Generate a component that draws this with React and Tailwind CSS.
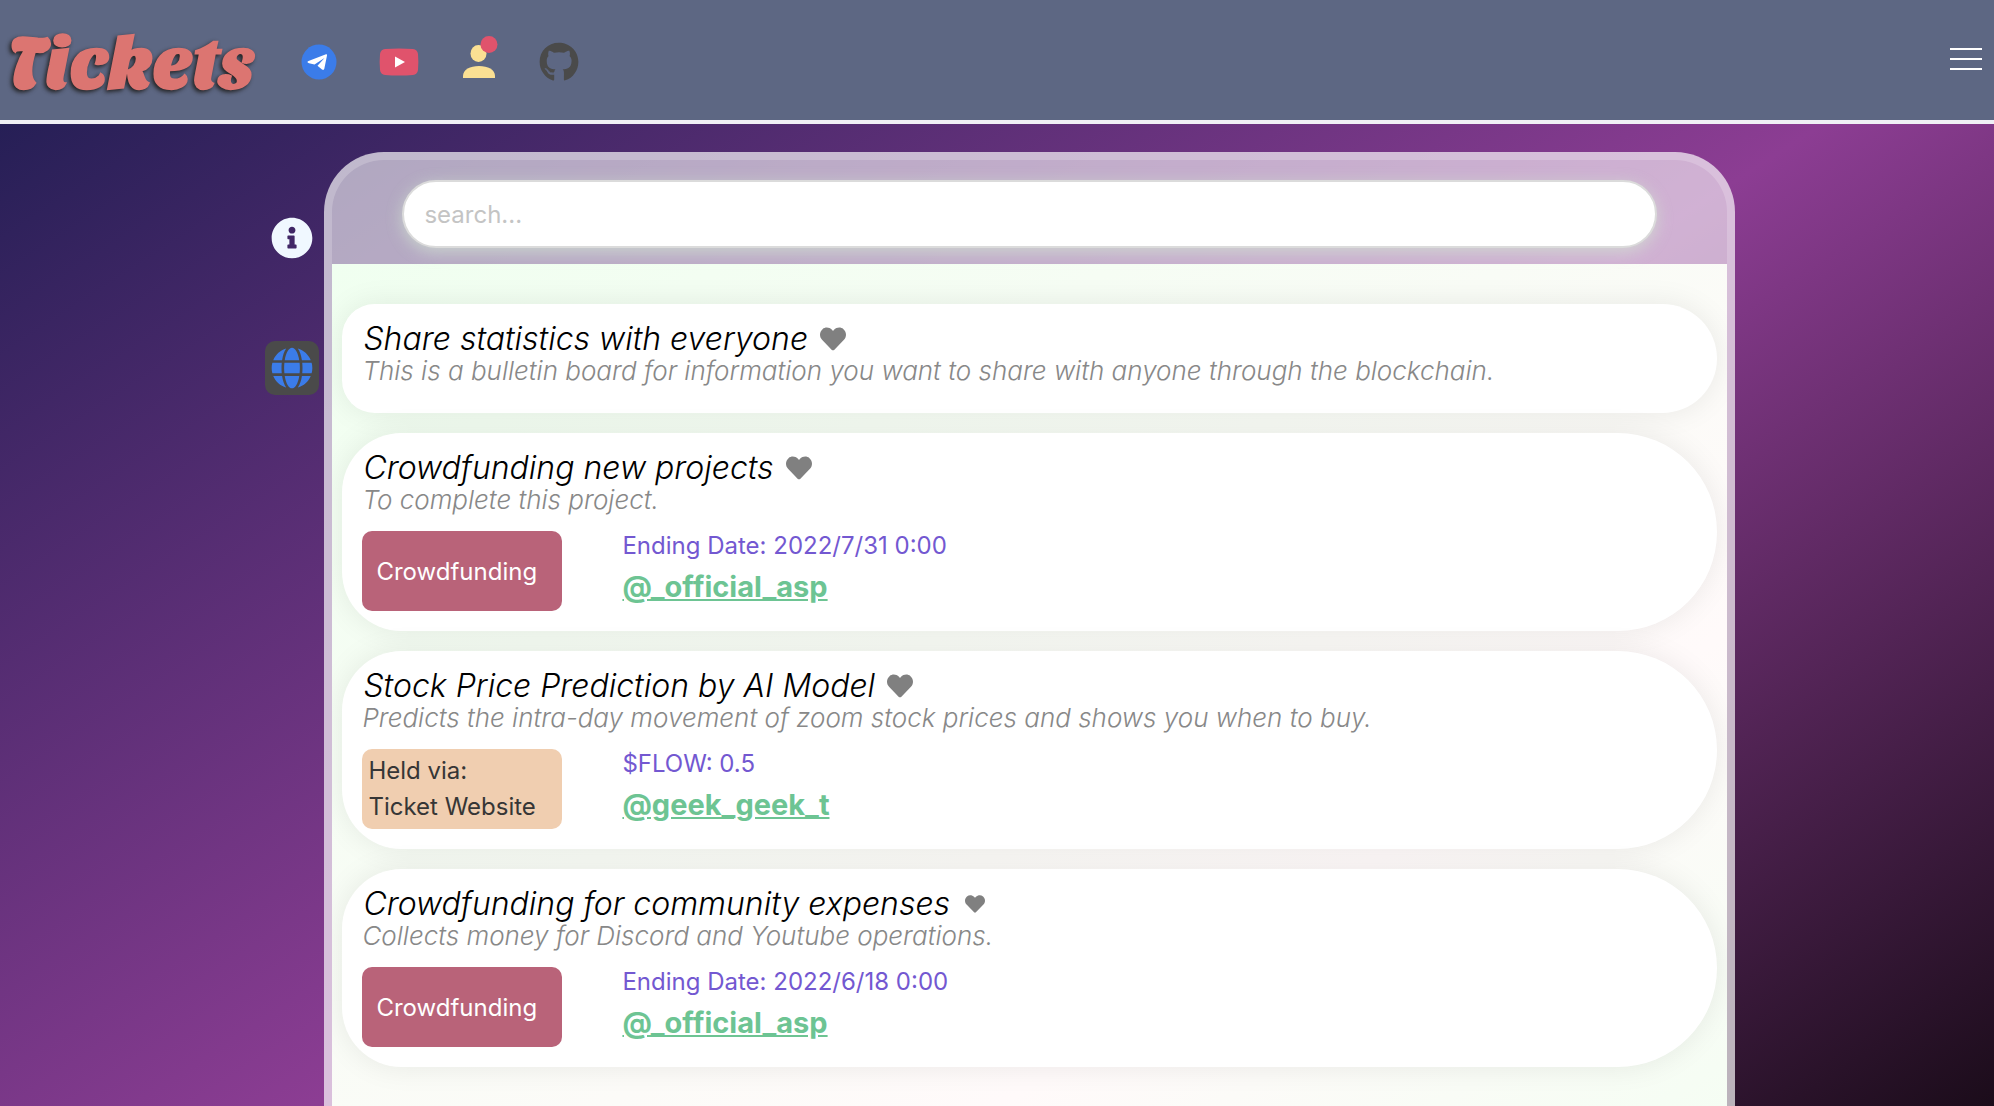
import { FaGithub, FaHeart, FaGlobe, FaInfoCircle } from "react-icons/fa";

const tickets = [
  { title: "Share statistics with everyone", text: "This is a bulletin board for information you want to share with anyone through the blockchain." },
  { title: "Crowdfunding new projects", text: "To complete this project.", kind: "fund", info: "Ending Date: 2022/7/31 0:00", user: "@_official_asp" },
  { title: "Stock Price Prediction by AI Model", text: "Predicts the intra-day movement of zoom stock prices and shows you when to buy.", kind: "web", info: "$FLOW: 0.5", user: "@geek_geek_t" },
  { title: "Crowdfunding for community expenses", text: "Collects money for Discord and Youtube operations.", kind: "fund", info: "Ending Date: 2022/6/18 0:00", user: "@_official_asp", small: true },
];

function Badge({ kind }) {
  if (kind === "fund")
    return <div className="flex h-20 w-[200px] items-center rounded-[10px] bg-[#b96379] px-3.5 pt-0.5 text-2xl text-white">Crowdfunding</div>;
  return (
    <div className="flex h-20 w-[200px] flex-col justify-center rounded-[10px] bg-[#f0ceb0] px-1.5 text-2xl leading-9 text-[#363636]">
      <span>Held via:</span>
      <span>Ticket Website</span>
    </div>
  );
}

function Ticket({ t }) {
  return (
    <article className="rounded-[60px_100px_100px_60px] bg-white px-5 pt-[17px] pb-5 shadow-[0_0_30px_rgba(0,0,0,0.08)]">
      <div className="flex items-center gap-3 pl-px">
        <h2 className="text-[32px] leading-9 font-light text-black italic">{t.title}</h2>
        <button aria-label="Like" className="flex w-[26px] justify-center text-[#808080]">
          <FaHeart className={t.small ? "size-5" : "size-[26px]"} />
        </button>
      </div>
      <p className="text-[26px] leading-7 font-light text-[#888888] italic">{t.text}</p>
      {t.kind ? (
        <div className="mt-[17px] flex gap-[60px]">
          <Badge kind={t.kind} />
          <div className="flex flex-col">
            <span className="text-2xl leading-[30px] text-[#7358d1]">{t.info}</span>
            <a href="#user" className="mt-2 text-[29px] leading-9 font-bold text-[#6dc493] underline">{t.user}</a>
          </div>
        </div>
      ) : (
        <div className="h-2" />
      )}
    </article>
  );
}

export default function App() {
  return (
    <div className="flex h-screen flex-col overflow-hidden font-['Inter',sans-serif]">
      <header className="flex h-[124px] shrink-0 items-center border-b-4 border-[#f0f0f5] bg-[#5d6783] px-2">
        <h1 className="w-[246px] pt-2 font-['Sansita_One','Liberation_Serif',serif] text-[74px] leading-none font-bold text-[#dc7571] [text-shadow:-2px_2px_4px_#222]">Tickets</h1>
        <nav className="ml-[45px] flex items-center gap-10 pt-1">
          <a href="#telegram" aria-label="Telegram" className="flex w-10 justify-center">
            <svg viewBox="0 0 36 36" className="size-9"><circle cx="18" cy="18" r="17.5" fill="#3b7ce9" /><path d="M6.500 18.300Q6.300 17.500 7.500 17L25 10.200Q26.300 9.900 26 11.500L23.300 24.800Q22.800 26.600 21 25.500L16.500 21.800 23.500 14 13.500 20.600 8 19.200Q6.800 19 6.500 18.300Z" fill="#fff" /></svg>
          </a>
          <a href="#youtube" aria-label="YouTube" className="flex w-10 justify-center">
            <svg viewBox="0 0 40 28" className="w-10"><path d="M6 1Q20 0 34 1 38.300 1.300 39 6 39.700 14 39 22 38.300 26.700 34 27 20 28 6 27 1.700 26.700 1 22 .3 14 1 6 1.700 1.300 6 1Z" fill="#e0536c" /><path d="M16 8.500 26 14 16 19.500Z" fill="#fff" /></svg>
          </a>
          <a href="#account" aria-label="Account" className="flex w-10 justify-center">
            <svg viewBox="0 0 40 52" className="h-[52px] w-10"><ellipse cx="19.500" cy="17.500" rx="8" ry="8.500" fill="#fbe093" /><path d="M4 42v-2c0-6.500 7-10 16-10s16 3.500 16 10v2Z" fill="#fbe093" /><circle cx="30" cy="8.500" r="8.500" fill="#e0536c" /></svg>
          </a>
          <a href="#github" aria-label="GitHub" className="text-[#4a4a4a]"><FaGithub className="size-10" /></a>
        </nav>
        <button aria-label="Menu" className="mr-1 mb-0.5 ml-auto flex w-8 flex-col gap-2">
          <span className="h-0.5 bg-white" /><span className="h-0.5 bg-white" /><span className="h-0.5 bg-white" />
        </button>
      </header>
      <main className="flex min-h-0 flex-1 bg-[linear-gradient(147deg,#261f56,#8c3d93_52%,#1b0c1a)] pt-7 pr-[13%]">
        <aside className="ml-auto flex w-[54px] shrink-0 flex-col items-center pt-[65px]">
          <button aria-label="Information" className="text-[#f0f8ff]"><FaInfoCircle className="size-[42px]" /></button>
          <button aria-label="Language" className="mt-[82px] rounded-[10px] bg-[#4a4a4a] p-1.5 text-[#3b7ce9]"><FaGlobe className="size-[42px]" /></button>
        </aside>
        <section className="ml-[5px] h-[1200px] w-[81.3%] shrink-0 overflow-hidden rounded-t-[60px] border-8 border-white/20 bg-white/60">
          <div className="h-[104px] px-[70px] pt-5">
            <input aria-label="Search" placeholder="search..." className="h-[68px] w-full rounded-full border-2 border-[#dbdbdb] bg-white px-5 text-2xl shadow-[0_4px_16px_rgba(210,230,210,0.7)] outline-none placeholder:text-[#c4c4c4]" />
          </div>
          <div className="flex h-full flex-col gap-5 bg-[linear-gradient(147deg,#f0fff0,#fffafa_61%,#f0fff0_95%)] px-2.5 pt-10">
            {tickets.map((t) => <Ticket key={t.title} t={t} />)}
          </div>
        </section>
      </main>
    </div>
  );
}
